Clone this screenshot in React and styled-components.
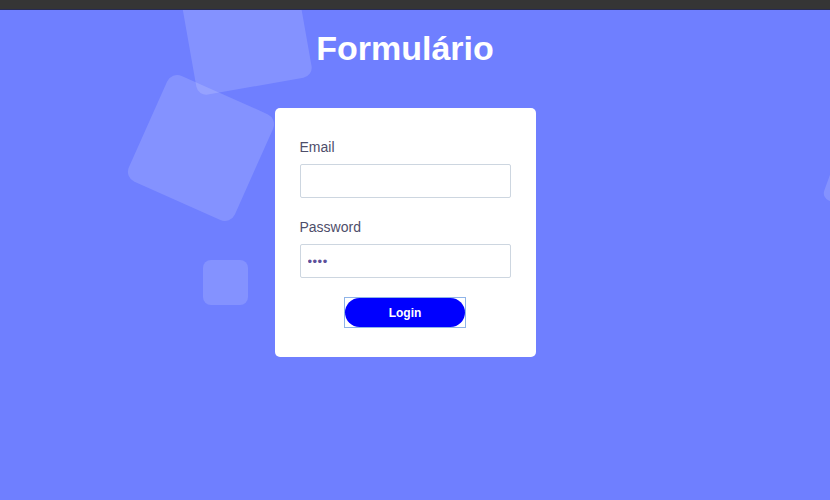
import React from 'react';
import styled, { createGlobalStyle } from 'styled-components';

const GlobalStyle = createGlobalStyle`
  html, body {
    margin: 0;
    padding: 0;
    background: #6f7fff;
  }
  body {
    font-family: "Liberation Sans", Arial, sans-serif;
  }
`;

const squares = [
  { left: 187, top: -40, size: 117, rotate: -10, radius: 10 },
  { left: 143, top: 80, size: 116, rotate: 24, radius: 11 },
  { left: 203, top: 250, size: 45, rotate: 0, radius: 8 },
  { left: 830, top: 140, size: 60, rotate: 20, radius: 8 },
];

const App = () => {
  return (
    <>
      <GlobalStyle />
      <St.Page>
        <St.TopBar />
        <St.Main>
          {squares.map((sq, i) => (
            <St.Square
              key={i}
              $size={sq.size}
              $radius={sq.radius}
              style={{ left: sq.left, top: sq.top, transform: `rotate(${sq.rotate}deg)` }}
            />
          ))}
          <St.Title>Formulário</St.Title>
          <St.Card>
            <St.Field>
              <St.Label htmlFor="email">Email</St.Label>
              <St.Input id="email" type="email" defaultValue="" />
            </St.Field>
            <St.Field>
              <St.Label htmlFor="password">Password</St.Label>
              <St.Input id="password" type="password" defaultValue="1234" />
            </St.Field>
            <St.ButtonRow>
              <St.FocusFrame>
                <St.LoginButton type="button">Login</St.LoginButton>
              </St.FocusFrame>
            </St.ButtonRow>
          </St.Card>
        </St.Main>
      </St.Page>
    </>
  );
};

export default App;

const St = {
  Page: styled.div`
    display: flex;
    flex-direction: column;
    width: 830px;
    height: 500px;
    overflow: hidden;
  `,
  TopBar: styled.div`
    height: 10px;
    flex-shrink: 0;
    background: #353535;
    border-bottom: 1px solid #262a55;
    box-sizing: border-box;
  `,
  Main: styled.div`
    position: relative;
    flex: 1;
    display: flex;
    flex-direction: column;
    align-items: center;
    padding-right: 20px;
    background: #6f7fff;
    overflow: hidden;
  `,
  Square: styled.div`
    position: absolute;
    width: ${({ $size }) => $size}px;
    height: ${({ $size }) => $size}px;
    border-radius: ${({ $radius }) => $radius}px;
    background: rgba(255, 255, 255, 0.15);
  `,
  Title: styled.h1`
    position: relative;
    margin: 20px 0 0;
    font-size: 34px;
    font-weight: bold;
    line-height: 37px;
    color: #ffffff;
  `,
  Card: styled.form`
    position: relative;
    display: flex;
    flex-direction: column;
    width: 261px;
    box-sizing: border-box;
    margin-top: 41px;
    padding: 31px 25px 29px;
    background: #ffffff;
    border-radius: 5px;
  `,
  Field: styled.div`
    display: flex;
    flex-direction: column;
    gap: 8px;
    margin-bottom: 21px;
  `,
  Label: styled.label`
    font-size: 14px;
    line-height: 17px;
    color: #4e4e6a;
  `,
  Input: styled.input`
    width: 100%;
    height: 34px;
    box-sizing: border-box;
    padding: 0 7px;
    border: 1px solid #cdd6e0;
    border-radius: 2px;
    font-family: "Liberation Sans", Arial, sans-serif;
    font-size: 13px;
    letter-spacing: 0.5px;
    color: #5d509a;
    outline: none;
  `,
  ButtonRow: styled.div`
    display: flex;
    justify-content: center;
    margin-top: -2px;
  `,
  FocusFrame: styled.div`
    display: flex;
    border: 1px solid #8fb4e8;
  `,
  LoginButton: styled.button`
    width: 120px;
    height: 29px;
    padding: 0;
    border: none;
    border-radius: 15px;
    background: #0000ff;
    color: #ffffff;
    font-family: "Liberation Sans", Arial, sans-serif;
    font-size: 12px;
    font-weight: bold;
    cursor: pointer;
  `,
};
